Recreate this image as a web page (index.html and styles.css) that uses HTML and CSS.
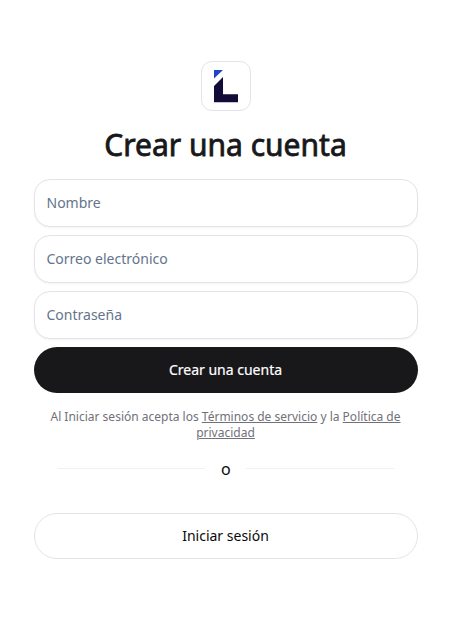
FILE: index.html
```
<!DOCTYPE html>
<html lang="es">
<head>
<meta charset="utf-8">
<title>Crear una cuenta</title>
<link rel="stylesheet" href="styles.css">
</head>
<body>
<main class="page">
  <div class="logo">
    <svg viewBox="0 0 50 50" width="50" height="50" aria-hidden="true">
      <path d="M13 9H22L13 17.5Z" fill="#1d45c4"/>
      <path d="M13 25L22 16V33.3H37V41.3H13Z" fill="#120c38"/>
    </svg>
  </div>
  <h1 class="title">Crear una cuenta</h1>
  <form class="form">
    <input class="field" type="text" placeholder="Nombre">
    <input class="field" type="email" placeholder="Correo electrónico">
    <input class="field" type="password" placeholder="Contraseña">
    <button class="button primary" type="button">Crear una cuenta</button>
  </form>
  <p class="terms">Al Iniciar sesión acepta los <a href="#">Términos de servicio</a> y la <a href="#">Política de privacidad</a></p>
  <div class="divider"><span>o</span></div>
  <button class="button secondary" type="button">Iniciar sesión</button>
</main>
</body>
</html>
```
FILE: styles.css
```
* { box-sizing: border-box; }
body {
  margin: 0;
  background: #fff;
  color: #18181b;
  font-family: "Noto Sans", sans-serif;
}
.page {
  display: flex;
  flex-direction: column;
  width: 384px;
  margin-left: 34px;
  padding-top: 61px;
}
.logo {
  align-self: center;
  width: 50px;
  height: 50px;
  border: 1px solid #e4e4e7;
  border-radius: 11px;
  overflow: hidden;
}
.logo svg { display: block; margin: -1px; }
.title {
  margin: 16px 0 0;
  padding-right: 1px;
  font-size: 30px;
  line-height: 36px;
  font-weight: 400;
  -webkit-text-stroke: 0.8px currentColor;
  text-align: center;
}
.form {
  display: flex;
  flex-direction: column;
  gap: 8px;
  margin-top: 16px;
}
.field {
  width: 100%;
  height: 48px;
  padding: 3px 12px 5px 11.5px;
  border: 1px solid #e4e4e7;
  border-radius: 16px;
  box-shadow: 0 1px 2px rgba(0, 0, 0, 0.05);
  font: 14px/20px "Noto Sans", sans-serif;
}
.field::placeholder { color: #64748b; opacity: 1; }
.button {
  width: 100%;
  height: 46px;
  padding: 0 1px 0 0;
  border-radius: 23px;
  font: 14px/20px "Noto Sans", sans-serif;
}
.primary {
  border: 0;
  background: #18181b;
  color: #fff;
  -webkit-text-stroke: 0.2px currentColor;
}
.secondary { border: 1px solid #e4e4e7; background: #fff; color: #09090b; }
.terms {
  margin: 16px 0 0;
  padding-right: 1px;
  font-size: 12px;
  line-height: 16px;
  color: #71717a;
  text-align: center;
}
.terms a { color: inherit; }
.divider {
  display: grid;
  grid-template-columns: 147px 9px 148px;
  column-gap: 16px;
  height: 24px;
  margin: 16px 24px 32px;
  color: #09090b;
  font-size: 16px;
  line-height: 24px;
}
.divider::before, .divider::after {
  content: "";
  height: 1px;
  margin-top: 11px;
  background: #f1f1f3;
}
```
